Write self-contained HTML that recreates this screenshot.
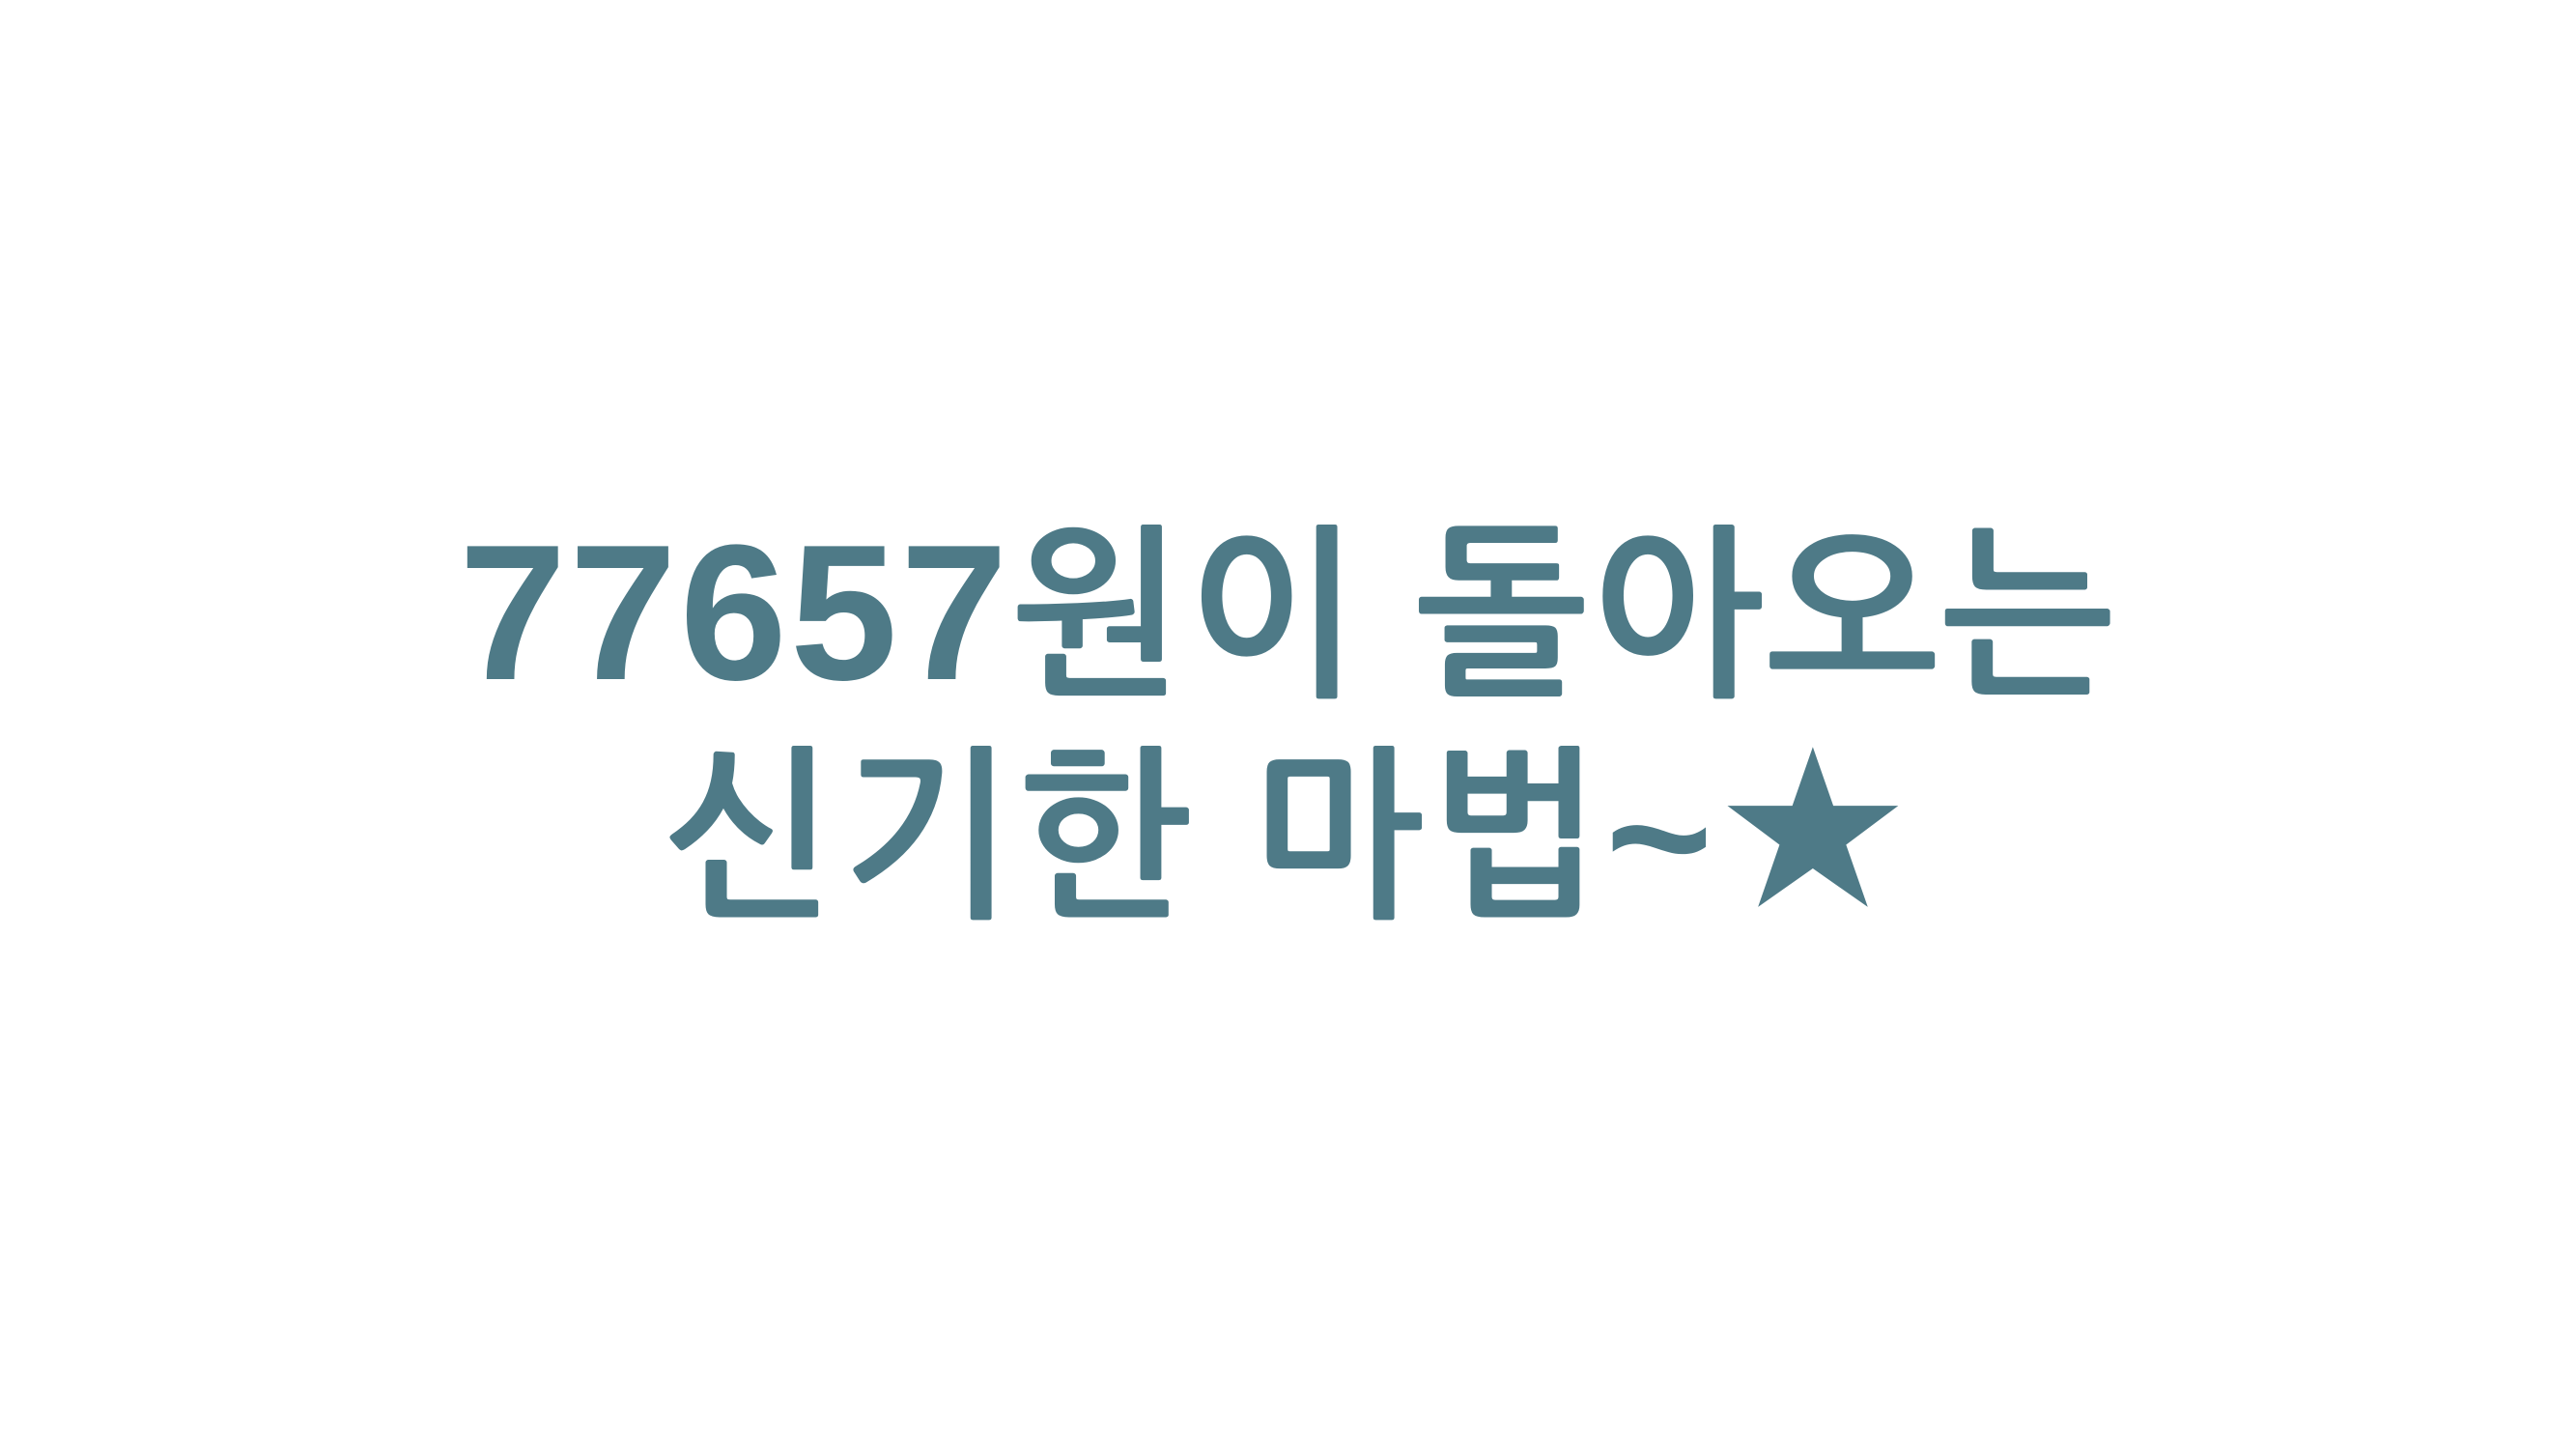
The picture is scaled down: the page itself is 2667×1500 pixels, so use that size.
<!DOCTYPE html>
<html><head><meta charset="utf-8"><style>
html,body{margin:0;padding:0;background:#fff;width:2667px;height:1500px;overflow:hidden}
.l{position:absolute;left:0;width:2667px;text-align:center;color:#4e7a87;font-family:"Liberation Sans","NanumGothic","Noto Sans CJK KR",sans-serif;font-weight:bold;font-size:190px;line-height:200px;white-space:nowrap;letter-spacing:5px}
.d{font-size:200px}
.s{font-size:210px}
</style></head><body>
<div class="l" style="top:535px;letter-spacing:3px"><span class="d">77657</span>원이 돌아오는</div>
<div class="l" style="top:760px">신기한 마법~<span class="s">★</span></div>
</body></html>
